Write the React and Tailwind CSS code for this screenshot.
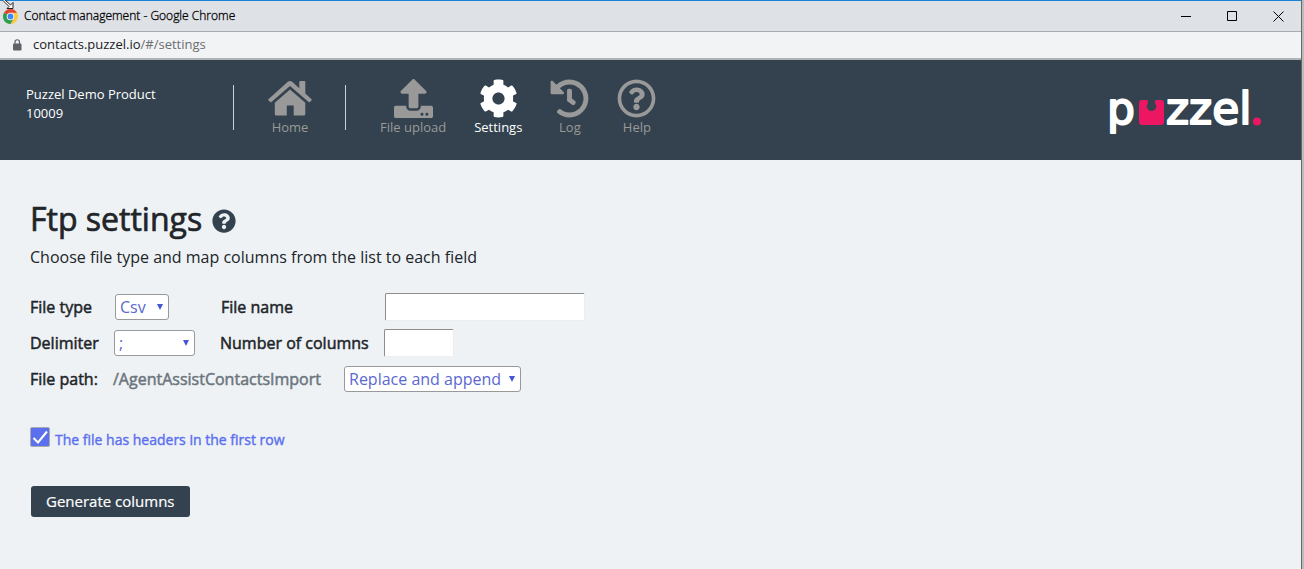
import { FaUpload, FaCog, FaHistory, FaRegQuestionCircle, FaQuestionCircle } from "react-icons/fa";

const sans = "font-['Open_Sans','Noto_Sans',sans-serif]";

function ChromeLogo() {
  return (
    <svg viewBox="0 0 16 16" className="size-[15px] shrink-0" aria-hidden="true">
      <circle cx="8" cy="8" r="8" fill="#fbc942" />
      <path d="M8 8 L1.07 4 A8 8 0 0 1 14.93 4 L8 4Z" fill="#e0453a" />
      <path d="M8 8 L1.07 4 A8 8 0 0 0 8 16 L11.46 10Z" fill="#2d9f52" />
      <circle cx="8" cy="8" r="4" fill="#fff" />
      <circle cx="8" cy="8" r="3.1" fill="#4285f4" />
    </svg>
  );
}

function ResizeCursor() {
  return (
    <svg viewBox="0 0 16 10" className="absolute left-0 -top-px h-[10px] w-4" aria-hidden="true">
      <path d="M5 0 L10.500 5 L13 2.500 V8.500 H7 L9 6.500 L3 0.500" fill="#fff" stroke="#222" />
    </svg>
  );
}

function LockIcon() {
  return (
    <svg viewBox="0 0 10 12" className="h-3 w-[10px]" aria-hidden="true">
      <rect x="1" y="4.500" width="8.500" height="7" rx="1" fill="#5f6368" />
      <path d="M3 5V3A2.200 2.200 0 0 1 7.500 3V5" fill="none" stroke="#5f6368" strokeWidth="1.200" />
    </svg>
  );
}

function HomeIcon({ className }) {
  return (
    <svg viewBox="0 0 44 39" className={`${className} w-11`} fill="currentColor" aria-hidden="true">
      <path d="M.4 20.200 L19.500 3 Q22 1 24.500 3 L31.300 9.200 V3 Q31.300 2 32.300 2 H36.300 Q37.300 2 37.300 3 V14.500 L43.600 20.200 Q44 20.700 43.600 21.200 L41.800 23 Q41.200 23.500 40.600 23 L22 7 L3.400 23 Q2.800 23.500 2.200 23 L.4 21.200 Q0 20.700 .4 20.200Z" />
      <path d="M22 10.500 L37.300 23.700 V35 Q37.300 36.500 35.800 36.500 H25.700 V26.500 H18.800 V36.500 H8.300 Q6.800 36.500 6.800 35 V23.700Z" />
    </svg>
  );
}

function TitleBar() {
  return (
    <div className="relative flex h-8 items-center border-t border-b border-t-[#1883d7] border-b-[#a9abae] bg-[#dee1e6] pl-[3px]">
      <ChromeLogo />
      <ResizeCursor />
      <span className="grow pl-[6px] text-[12px] font-light text-black [-webkit-text-stroke:0.3px]">Contact management - Google Chrome</span>
      <button aria-label="Minimize" className="flex h-full w-[46px] items-center justify-center">
        <svg viewBox="0 0 11 11" className="size-[11px]"><path d="M0 5.500H10" stroke="#000" /></svg>
      </button>
      <button aria-label="Maximize" className="flex h-full w-[46px] items-center justify-center">
        <svg viewBox="0 0 11 11" className="size-[11px]"><path d="M.5 .5H9.500V9.500H.5Z" stroke="#000" fill="none" /></svg>
      </button>
      <button aria-label="Close" className="flex h-full w-[46px] items-center justify-center">
        <svg viewBox="0 0 11 11" className="size-[11px]"><path d="M.5 .5L10.500 10.500M10.500 .5L.5 10.500" stroke="#000" /></svg>
      </button>
    </div>
  );
}

function AddressBar() {
  return (
    <div className="flex h-7 items-center border-b-2 border-[#b1b3b6] bg-[#f1f3f4] pl-3 text-[13px] text-[#202124]">
      <LockIcon />
      <span className="pl-[11px]">contacts.puzzel.io<span className="text-[#6b6e72]">/#/settings</span></span>
    </div>
  );
}

function NavItem({ icon: Icon, label, active }) {
  return (
    <a href="#" className={`flex flex-col items-center text-[13px] leading-[18px] ${active ? "text-white" : "text-[#999]"}`}>
      <Icon className="h-[39px] w-auto" />
      <span>{label}</span>
    </a>
  );
}

function PuzzelLogo() {
  return (
    <svg viewBox="-6 -8 166 64" className="h-16 w-[166px]" role="img" aria-label="puzzel.">
      <g className="font-['DejaVu_Sans',sans-serif] text-[44px]" fill="#fff" stroke="#fff" strokeWidth="2" strokeLinejoin="round">
        <text x="-1" y="37">p</text>
        <text x="58" y="37">zzel</text>
      </g>
      <path d="M34 13 H38 Q41 13 39.800 16.500 A4.600 4.600 0 1 0 47.200 16.500 Q46 13 49 13 H53 Q56 13 56 16 V35 Q56 38 53 38 H34 Q31 38 31 35 V16 Q31 13 34 13Z" fill="#ed1663" />
      <circle cx="149" cy="34.500" r="4" fill="#ed1663" />
    </svg>
  );
}

function Header() {
  return (
    <header className="flex h-[100px] items-start bg-[#33424e] pl-[26px] pr-[33px]">
      <p className="w-[207px] pt-[25px] text-[13px] leading-[19px] text-white">Puzzel Demo Product<br />10009</p>
      <nav className="flex grow items-start pt-[19px]">
        <div className="mt-[6px] h-[45px] w-px bg-[#ccd0d3]" />
        <div className="pr-[33px] pl-[34px]"><NavItem icon={HomeIcon} label="Home" /></div>
        <div className="mt-[6px] h-[45px] w-px bg-[#ccd0d3]" />
        <div className="flex gap-7 pl-[34px]">
          <NavItem icon={FaUpload} label="File upload" />
          <NavItem icon={FaCog} label="Settings" active />
          <NavItem icon={FaHistory} label="Log" />
          <NavItem icon={FaRegQuestionCircle} label="Help" />
        </div>
      </nav>
      <div className="pt-[19px]"><PuzzelLogo /></div>
    </header>
  );
}

function Select({ id, options, className, label }) {
  return (
    <div className={`relative h-[26px] ${className}`}>
      <select id={id} aria-label={label} className="h-full w-full appearance-none rounded-[3px] border border-[#999] bg-white pl-1 text-[16px] leading-6 text-[#5a68d0]">
        {options.map((o) => <option key={o}>{o}</option>)}
      </select>
      <svg viewBox="0 0 6 6" className="pointer-events-none absolute right-[6px] top-[10px] size-[6px]" aria-hidden="true"><path d="M0 0H6L3 6Z" fill="#4657cf" /></svg>
    </div>
  );
}

const strong = "text-[16px] leading-6 [-webkit-text-stroke:0.5px]";
const field = "h-7 rounded-[2px] border border-t-[#8d8d8d] border-l-[#8d8d8d] border-r-[#eee] border-b-[#eee] bg-white px-1";

export default function App() {
  return (
    <div className={`flex min-h-screen bg-[#eef2f5] ${sans}`}>
      <div className="flex grow flex-col">
        <TitleBar />
        <AddressBar />
        <Header />
        <main className="px-[30px] pt-[38px] text-[#212529]">
          <div className="flex items-center gap-[10px]">
            <h1 className="text-[32px] leading-[42px] [-webkit-text-stroke:0.7px]">Ftp settings</h1>
            <button aria-label="Help on ftp settings" className="pt-1"><FaQuestionCircle className="size-6 text-[#33424e]" /></button>
          </div>
          <p className="pt-[5px] text-[16px] leading-6 text-[#212529]">Choose file type and map columns from the list to each field</p>
          <form className="pt-5">
            <div className="flex h-9 items-center">
              <label htmlFor="type" className={`w-[85px] ${strong}`}>File type</label>
              <Select id="type" options={["Csv"]} className="w-[54px]" />
              <label htmlFor="name" className={`ml-[52px] w-[164px] ${strong}`}>File name</label>
              <input id="name" className={`w-[200px] ${field}`} />
            </div>
            <div className="flex h-9 items-center">
              <label htmlFor="delimiter" className={`w-[84px] ${strong}`}>Delimiter</label>
              <Select id="delimiter" options={[";"]} className="w-[81px]" />
              <label htmlFor="count" className={`ml-[25px] w-[164px] ${strong}`}>Number of columns</label>
              <input id="count" className={`w-[70px] ${field}`} />
            </div>
            <div className="flex h-9 items-center">
              <span className={`w-[83px] ${strong}`}>File path:</span>
              <span className={`w-[231px] text-[#6c757d] ${strong}`}>/AgentAssistContactsImport</span>
              <Select id="mode" label="Import mode" options={["Replace and append"]} className="w-[177px]" />
            </div>
            <label className="mt-[30px] flex w-fit items-start text-[14px] leading-5 text-[#5b70ee] [-webkit-text-stroke:0.4px]">
              <span className="relative mr-[5px] size-5">
                <input type="checkbox" defaultChecked className="peer block size-5 appearance-none rounded-[2px] border border-[#aaa] checked:bg-[#5b70ee]" />
                <svg viewBox="0 0 20 20" className="pointer-events-none absolute left-0 top-0 hidden size-5 peer-checked:block" aria-hidden="true"><path d="M3.500 11L8 15.500L17 4.500" fill="none" stroke="#fff" strokeWidth="2" /></svg>
              </span>
              <span className="pt-[3px]">The file has headers in the first row</span>
            </label>
            <button type="button" className="mt-9 ml-px h-[31px] rounded-[3px] bg-[#33424e] px-[15px] text-[15px] text-white [-webkit-text-stroke:0.2px]">Generate columns</button>
          </form>
        </main>
      </div>
      <div className="w-[3px] border-l border-[#66696c] bg-[#bbb]" />
    </div>
  );
}
